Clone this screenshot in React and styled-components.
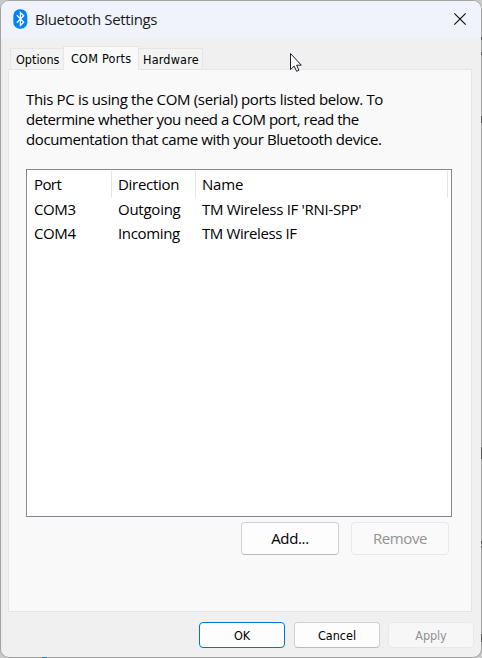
import React from "react";
import styled, { createGlobalStyle } from "styled-components";

const GlobalStyle = createGlobalStyle`
  * { box-sizing: border-box; }
  html, body { margin: 0; overflow: hidden; background: #c9c9c9; }
`;

const Desktop = styled.div`
  position: relative;
  width: 482px;
  height: 658px;
  background: #c9c9c9;
  color: #000;
  font: 15px/20px "Open Sans", "Noto Sans", sans-serif;
  white-space: nowrap;
`;

const Dialog = styled.div`
  display: flex;
  flex-direction: column;
  width: 482px;
  height: 658px;
  overflow: hidden;
  background: #f0f0f0;
  border: 1px solid #a3a3a3;
  border-radius: 9px;
`;

const TitleBar = styled.header`
  display: flex;
  align-items: center;
  flex: 0 0 37px;
  padding: 0 14px 1px 12px;
  background: #f0f3fb;
`;

const Title = styled.h1`
  flex: 1;
  margin: 0 0 0 7px;
  font-size: 15px;
  font-weight: 400;
  color: #1a1a1a;
`;

const CloseButton = styled.button`
  display: flex;
  padding: 0;
  border: 0;
  background: none;
`;

const Text = styled.span`
  letter-spacing: ${(p) => p.$track ?? -0.3}px;
`;

const TabStrip = styled.nav`
  display: flex;
  align-items: flex-end;
  height: 31px;
  padding-left: 9px;
  font: 12.5px/15px "DejaVu Sans Condensed", "DejaVu Sans", sans-serif;
`;

const Tab = styled.div`
  width: ${(p) => p.$width}px;
  height: ${(p) => (p.$active ? 24 : 21)}px;
  padding: ${(p) => (p.$active ? 4 : 3)}px 0 0 ${(p) => p.$inset}px;
  border: 1px solid #e5e5e5;
  border-bottom: 0;
  ${(p) => p.$joined && "border-left: 0;"}
  ${(p) => p.$before && "border-right: 0;"}
  background: ${(p) => (p.$active ? "#f9f9f9" : "#f3f3f3")};
  margin-bottom: ${(p) => (p.$active ? -1 : 0)}px;
  z-index: ${(p) => (p.$active ? 1 : 0)};
`;

const Panel = styled.main`
  display: flex;
  flex-direction: column;
  height: 543px;
  margin: 0 9px 0 7px;
  padding: 19px 19px 0 17px;
  background: #f9f9f9;
  border: 1px solid #e5e5e5;
`;

const Description = styled.p`
  margin: 0 0 20px;
`;

const Line = styled(Text)`
  display: block;
`;

const PortList = styled.section`
  width: 426px;
  height: 348px;
  padding: 1px 3px 0 0;
  background: #fff;
  border: 1px solid #828790;
`;

const Row = styled.div`
  display: grid;
  grid-template-columns: 85px 84px 1fr;
  height: 24px;
  line-height: 24px;
`;

const HeaderRow = styled(Row)`
  height: 26px;
  line-height: 27px;
`;

const Cell = styled.div`
  padding-left: 6px;

  &:first-child {
    padding-left: 7px;
  }
`;

const HeaderCell = styled(Cell)`
  border-right: 1px solid #e5e5e5;
`;

const Actions = styled.div`
  display: flex;
  gap: 12px;
  margin: 5px 0 0 215px;
`;

const Button = styled.button`
  display: flex;
  align-items: center;
  justify-content: center;
  width: 98px;
  height: 33px;
  padding: 0 0 2px;
  font: inherit;
  color: ${(p) => (p.disabled ? "#929292" : "#000")};
  background: ${(p) => (p.disabled ? "#fafafa" : "#fdfdfd")};
  border: 1px solid ${(p) => (p.disabled ? "#e9e9e9" : "#d0d0d0")};
  border-bottom-color: ${(p) => (p.disabled ? "#e9e9e9" : "#bababa")};
  border-radius: 4px;
`;

const Footer = styled.footer`
  display: flex;
  justify-content: flex-end;
  gap: 9px;
  padding: 10px 7px 0 0;
  font: 12.5px/15px "DejaVu Sans Condensed", "DejaVu Sans", sans-serif;
`;

const FooterButton = styled(Button)`
  width: 86px;
  height: 26px;
  padding: 0;
  ${(p) => p.$primary && "border-color: #0074cc;"}
  ${(p) => p.disabled && "background: #f7f7f7; margin-left: -1px;"}
`;

const Overlay = styled.svg`
  position: absolute;
  left: ${(p) => p.$x}px;
  top: ${(p) => p.$y}px;
`;

const tabs = [
  { label: "Options", width: 53, inset: 5, before: true },
  { label: "COM Ports", width: 76, inset: 7, active: true, track: 0.25 },
  { label: "Hardware", width: 64, inset: 4, joined: true, track: 0.2 },
];

const description = [
  ["This PC is using the COM (serial) ports listed below. To", -0.34],
  ["determine whether you need a COM port, read the", -0.47],
  ["documentation that came with your Bluetooth device.", -0.4],
];

const columns = [["Port", -0.6], ["Direction", -0.3], ["Name", -0.2]];

const ports = [
  [["COM3", -0.4], ["Outgoing", -0.25], ["TM Wireless IF 'RNI-SPP'", -0.3]],
  [["COM4", -0.4], ["Incoming", -0.35], ["TM Wireless IF", -0.4]],
];

const BluetoothIcon = () => (
  <svg width="15" height="20" viewBox="0 0 15 20">
    <rect x="0.3" y="0.3" width="14" height="19.4" rx="6.5" fill="#0082fc" />
    <path d="M3.8 6.1 10.7 13.3 7.4 16.5V3.5l3.3 3.2-6.9 7.1" fill="none" stroke="#fff" strokeWidth="1.3" />
  </svg>
);

export default function App() {
  return (
    <Desktop>
      <GlobalStyle />
      <Dialog>
        <TitleBar>
          <BluetoothIcon />
          <Title><Text $track={-0.36}>Bluetooth Settings</Text></Title>
          <CloseButton aria-label="Close">
            <svg width="14" height="14" viewBox="0 0 14 14">
              <path d="M1.3 1.3l11.4 11.4M12.7 1.3L1.3 12.7" stroke="#111" strokeWidth="1.2" />
            </svg>
          </CloseButton>
        </TitleBar>
        <TabStrip>
          {tabs.map((t) => (
            <Tab key={t.label} $width={t.width} $inset={t.inset} $active={t.active} $joined={t.joined} $before={t.before}>
              <Text $track={t.track ?? 0}>{t.label}</Text>
            </Tab>
          ))}
        </TabStrip>
        <Panel>
          <Description>
            {description.map(([text, track]) => <Line key={text} $track={track}>{text}</Line>)}
          </Description>
          <PortList>
            <HeaderRow>
              {columns.map(([text, track]) => (
                <HeaderCell key={text}><Text $track={track}>{text}</Text></HeaderCell>
              ))}
            </HeaderRow>
            {ports.map((row) => (
              <Row key={row[0][0]}>
                {row.map(([text, track]) => <Cell key={text}><Text $track={track}>{text}</Text></Cell>)}
              </Row>
            ))}
          </PortList>
          <Actions>
            <Button><Text $track={-0.35}>Add...</Text></Button>
            <Button disabled><Text $track={-0.4}>Remove</Text></Button>
          </Actions>
        </Panel>
        <Footer>
          <FooterButton $primary><Text $track={0}>OK</Text></FooterButton>
          <FooterButton><Text $track={0}>Cancel</Text></FooterButton>
          <FooterButton disabled><Text $track={-0.1}>Apply</Text></FooterButton>
        </Footer>
      </Dialog>
      {/* Slivers of the content behind the dialog */}
      <Overlay $x={481} $y={0} width="1" height="658" viewBox="0 0 1 658">
        <path d="M.5 37v3M.5 52v3M.5 116v7M.5 447v12M.5 541v3M.5 546v2M.5 634v8" stroke="#555" />
      </Overlay>
      <Overlay $x={42} $y={657} width="5" height="1" viewBox="0 0 5 1">
        <path d="M0 .5h5" stroke="#2879a8" />
      </Overlay>
      <Overlay $x={289} $y={52} width="15" height="21" viewBox="0 0 15 21">
        <path d="M1.5 1.5v16l3.7-3.4 2.4 5.2 2.3-1-2.3-5.1h4.7z" fill="#fff" stroke="#1c1c2c" strokeWidth="1" />
      </Overlay>
    </Desktop>
  );
}
